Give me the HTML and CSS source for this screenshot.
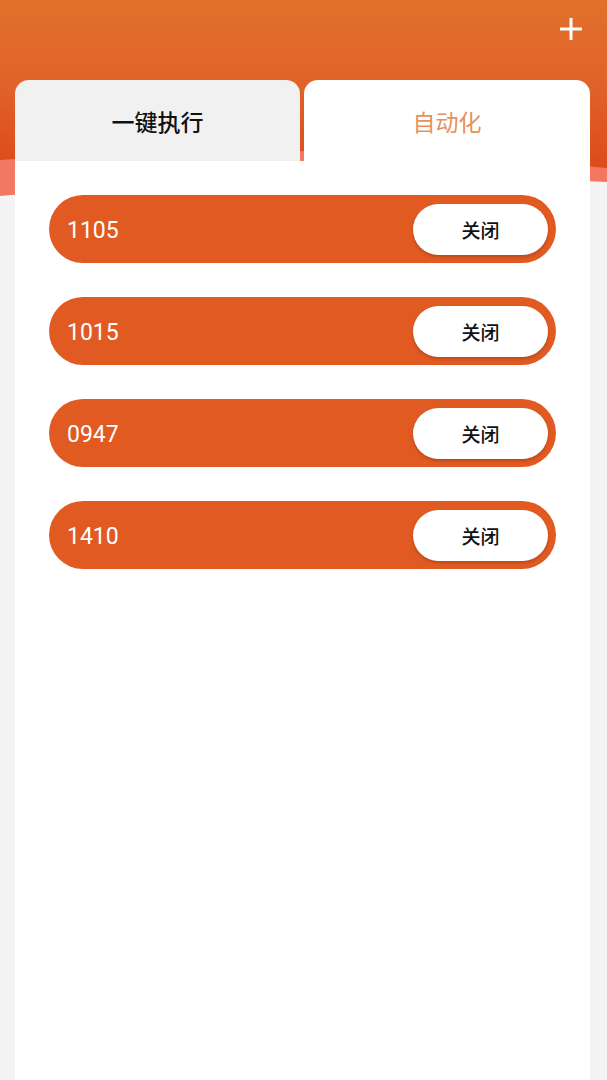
FILE: index.html
```html
<!DOCTYPE html>
<html lang="zh-CN">
<head>
    <meta charset="UTF-8">
    <meta name="viewport" content="width=device-width, initial-scale=1.0">
    <title>自动化</title>
    <link rel="stylesheet" href="styles.css">
</head>
<body>
<div class="header">
    <svg class="header-bg" viewBox="0 0 607 200" preserveAspectRatio="none">
        <defs>
            <linearGradient id="hg" x1="0" y1="0" x2="0" y2="1">
                <stop offset="0" stop-color="#e2702a"/>
                <stop offset="0.55" stop-color="#e0612a"/>
                <stop offset="1" stop-color="#dd4b1a"/>
            </linearGradient>
        </defs>
        <path d="M0 0 H607 V182 Q300 168 0 196 Z" fill="#f27862"/>
        <path d="M0 0 H607 V168 Q300 138 0 160 Z" fill="url(#hg)"/>
    </svg>
    <button class="add-btn" type="button" aria-label="添加">
        <svg width="26" height="26" viewBox="0 0 26 26">
            <path d="M13 2 V24 M2 13 H24" stroke="#fff" stroke-width="3" fill="none"/>
        </svg>
    </button>
</div>

<div class="card">
    <div class="tabs">
        <div class="tab">一键执行</div>
        <div class="tab active">自动化</div>
    </div>
    <div class="panel">
        <ul class="task-list">
            <li class="task"><span class="task-name">1105</span><button class="task-btn" type="button">关闭</button></li>
            <li class="task"><span class="task-name">1015</span><button class="task-btn" type="button">关闭</button></li>
            <li class="task"><span class="task-name">0947</span><button class="task-btn" type="button">关闭</button></li>
            <li class="task"><span class="task-name">1410</span><button class="task-btn" type="button">关闭</button></li>
        </ul>
    </div>
</div>
</body>
</html>
```

FILE: styles.css
```css
body {
    margin: 0;
    background-color: #f4f4f4;
    font-family: Roboto, "Noto Sans CJK SC", sans-serif;
    color: #1a1a1a;
}
.header {
    position: relative;
    height: 200px;
    display: flex;
    justify-content: flex-end;
    align-items: flex-start;
}
.header-bg {
    position: absolute;
    top: 0;
    left: 0;
    width: 100%;
    height: 100%;
}
.add-btn {
    position: relative;
    background: none;
    border: none;
    padding: 0;
    margin: 16px 23px 0 0;
    width: 26px;
    height: 26px;
    cursor: pointer;
}
.add-btn svg {
    display: block;
}
.card {
    position: relative;
    margin: -120px 17px 0 15px;
}
.tabs {
    display: grid;
    grid-template-columns: 285px 1fr;
    column-gap: 4px;
}
.tab {
    height: 81px;
    display: flex;
    align-items: center;
    justify-content: center;
    font-family: "Noto Sans CJK SC", sans-serif;
    font-size: 23px;
    font-weight: 500;
    background-color: #f2f1f1;
    border-radius: 14px 14px 0 0;
    color: #111;
}
.tab.active {
    background-color: #fff;
    color: #e8915c;
    font-weight: 400;
}
.panel {
    background-color: #fff;
    min-height: 919px;
    padding: 34px 34px;
    box-sizing: border-box;
}
.task-list {
    list-style: none;
    margin: 0;
    padding: 0;
    display: flex;
    flex-direction: column;
    gap: 34px;
}
.task {
    height: 68px;
    border-radius: 34px;
    background-color: #e05a22;
    display: flex;
    align-items: center;
    justify-content: space-between;
    padding: 0 8px 0 18px;
}
.task-name {
    color: #fff;
    font-size: 23px;
    margin-top: 2px;
}
.task-btn {
    width: 135px;
    height: 51px;
    border: none;
    border-radius: 26px;
    background-color: #fff;
    color: #111;
    font-family: "Noto Sans CJK SC", sans-serif;
    font-size: 19px;
    font-weight: 500;
    box-shadow: 0 2px 3px rgba(0, 0, 0, 0.18);
    cursor: pointer;
}
```
